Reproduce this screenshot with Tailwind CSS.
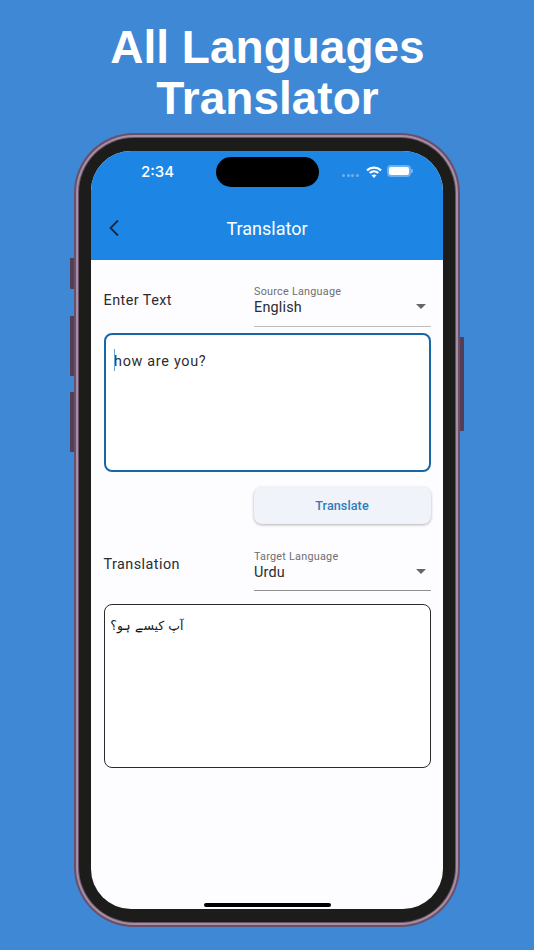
<!doctype html>
<html lang="en">
    <head>
        <meta charset="UTF-8" />
        <title>All Languages Translator</title>
        <script src="https://cdn.jsdelivr.net/npm/@tailwindcss/browser@4"></script>
    </head>

    <body class="w-[534px] h-[950px] overflow-hidden bg-[#3f88d6] font-['Roboto',sans-serif]">
        <!-- Title -->
        <h1 class="pt-[22px] pl-[1px] h-[133px] text-center text-white font-bold font-['Liberation_Sans',sans-serif] text-[46px] leading-[51px]">
            All Languages<br />Translator
        </h1>

        <!-- Phone frame -->
        <div class="relative ml-[74px] w-[386px] h-[794px] rounded-[60px] bg-[#6a4f68] p-[2px]">
            <!-- Side buttons -->
            <div class="absolute left-[-4px] top-[125px] w-[4px] h-[31px] rounded-l-[1px] bg-[#553d55]"></div>
            <div class="absolute left-[-4px] top-[183px] w-[4px] h-[60px] rounded-l-[1px] bg-[#553d55]"></div>
            <div class="absolute left-[-4px] top-[259px] w-[4px] h-[60px] rounded-l-[1px] bg-[#553d55]"></div>
            <div class="absolute right-[-4px] top-[204px] w-[4px] h-[94px] rounded-r-[1px] bg-[#553d55]"></div>

            <div class="w-full h-full rounded-[58px] bg-[#a48fa3] p-[2px]">
                <div class="w-full h-full rounded-[56px] bg-[#6a4f68] p-[1px]">
                    <div class="w-full h-full rounded-[55px] bg-[#1c1c1a] px-[12px] pt-[13px]">
                        <!-- Screen -->
                        <div class="relative w-[352px] h-[758px] rounded-[40px] overflow-hidden bg-[#fdfdff]">
                            <!-- App bar -->
                            <div class="relative h-[109px] bg-[#1d86e5] text-white">
                                <div class="absolute left-[50px] top-[12px] font-['Inter',sans-serif] text-[15px] leading-[18px] font-medium">2:34</div>
                                <div class="absolute left-[125px] top-[6px] w-[103px] h-[30px] rounded-full bg-black"></div>
                                <div class="absolute left-[251px] top-[23px] flex gap-[1.5px]">
                                    <span class="w-[3px] h-[3px] rounded-full bg-white/35"></span>
                                    <span class="w-[3px] h-[3px] rounded-full bg-white/35"></span>
                                    <span class="w-[3px] h-[3px] rounded-full bg-white/35"></span>
                                    <span class="w-[3px] h-[3px] rounded-full bg-white/35"></span>
                                </div>
                                <svg class="absolute left-[275px] top-[15px]" width="16" height="12" viewBox="0 0 16 12" fill="none" stroke="white" stroke-width="2.3">
                                    <path d="M1 4.3C5 .7 11 .7 15 4.300" />
                                    <path d="M3.700 7C6.200 4.800 9.800 4.800 12.300 7" />
                                    <path d="M8 12 5.500 9.300C7 8.100 9 8.100 10.500 9.300Z" fill="white" stroke="none" />
                                </svg>
                                <div class="absolute left-[296px] top-[14px] w-[24px] h-[12px] rounded-[4px] bg-white border-[2px] border-[#6db0f0]"></div>
                                <div class="absolute left-[320px] top-[18px] w-[2px] h-[4px] rounded-r-[1px] bg-[#6db0f0]"></div>
                                <svg class="absolute left-[17px] top-[68px]" width="13" height="18" viewBox="0 0 13 18" fill="none" stroke="#15273a" stroke-width="1.8">
                                    <path d="M10 1.500 2.500 9l7.500 7.500" />
                                </svg>
                                <div class="pt-[65px] text-center text-[18px] leading-[25px]">Translator</div>
                            </div>

                            <!-- Form -->
                            <div class="px-[12.5px]">
                                <div class="flex h-[67px]">
                                    <div class="w-[150.5px] pt-[31px] text-[14.4px] leading-[20px] tracking-[0.45px] text-[#2c2c30]">Enter Text</div>
                                    <div class="relative flex-1 pt-[26px] border-b-[1px] border-[#bdbdc0]">
                                        <div class="text-[10.8px] leading-[12px] tracking-[0.25px] text-[#6e6e74]">Source Language</div>
                                        <div class="text-[14.4px] leading-[20px] tracking-[0.2px] text-[#2c2c30]">English</div>
                                        <div class="absolute right-[5px] top-[44px] w-0 h-0 border-x-[5px] border-x-transparent border-t-[5px] border-t-[#66666a]"></div>
                                    </div>
                                </div>

                                <div class="relative mt-[6px] h-[139px] rounded-[8px] border-[2px] border-[#1767a8] bg-white pl-[8.5px] pt-[17px] text-[14.4px] leading-[20px] tracking-[0.7px] text-[#2c2c30]">
                                    <span class="absolute left-[8px] top-[14px] w-[1.5px] h-[22px] bg-[#6ea3d0]"></span>
                                    how are you?
                                </div>

                                <div class="flex justify-end mt-[15px]">
                                    <div class="w-[177px] h-[37px] rounded-[8px] bg-[#f0f3fa] shadow-[0_1px_3px_rgba(0,0,0,0.3)] text-center text-[12.6px] leading-[37px] font-medium tracking-[0.09px] text-[#2f7cbb]">Translate</div>
                                </div>

                                <div class="flex h-[66px] mt-[1px]">
                                    <div class="w-[150.5px] pt-[30px] text-[14.4px] leading-[20px] tracking-[0.45px] text-[#2c2c30]">Translation</div>
                                    <div class="relative flex-1 pt-[26px] border-b-[1px] border-[#8f8f94]">
                                        <div class="text-[10.8px] leading-[12px] tracking-[0.25px] text-[#6e6e74]">Target Language</div>
                                        <div class="text-[14.4px] leading-[20px] tracking-[0.2px] text-[#2c2c30]">Urdu</div>
                                        <div class="absolute right-[5px] top-[44px] w-0 h-0 border-x-[5px] border-x-transparent border-t-[5px] border-t-[#66666a]"></div>
                                    </div>
                                </div>

                                <div dir="rtl" lang="ur" class="mt-[13px] h-[164px] rounded-[8px] border-[1px] border-[#2a2a2e] bg-white pr-[246px] pt-[7px] font-['DejaVu_Sans',sans-serif] text-[12.5px] leading-[28px] text-[#1a1a1a] whitespace-nowrap">
                                    آپ کیسے ہو؟
                                </div>
                            </div>

                            <!-- Home indicator -->
                            <div class="absolute left-[113px] bottom-[2px] w-[127px] h-[4px] rounded-full bg-black"></div>
                        </div>
                    </div>
                </div>
            </div>
        </div>
    </body>
</html>
